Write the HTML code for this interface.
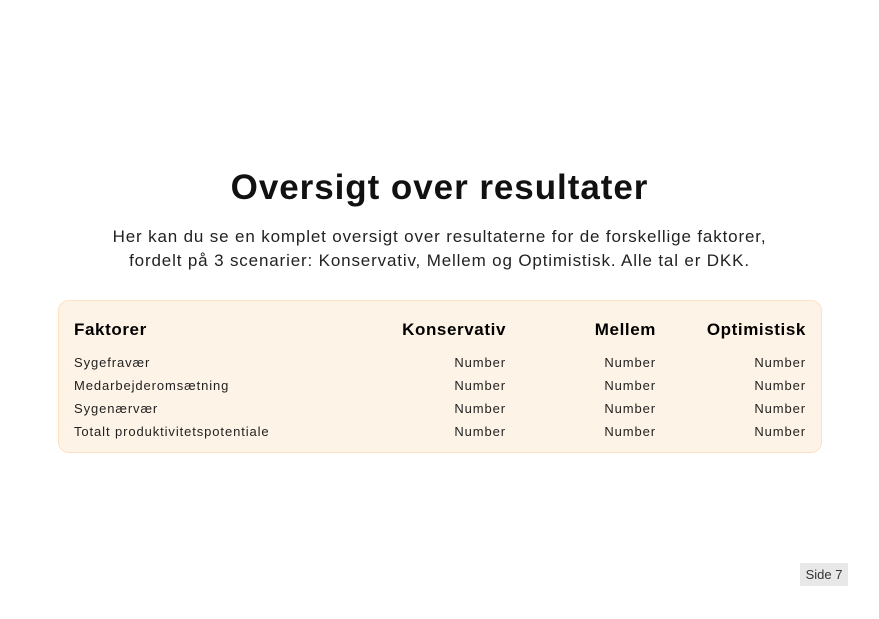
<!DOCTYPE html>
<html><head><meta charset="utf-8"><style>
body{margin:0;width:879px;height:619px;background:#fff;font-family:"Liberation Sans",sans-serif;color:#111;position:relative;overflow:hidden}
h1{position:absolute;top:166px;left:0;width:879px;text-align:center;margin:0;font-size:35px;font-weight:bold;line-height:44px;letter-spacing:0.95px}
p{position:absolute;top:225px;left:0;width:879px;text-align:center;margin:0;font-size:17px;line-height:24px;color:#222;letter-spacing:0.85px}
.card{position:absolute;left:58px;top:300px;width:762px;height:151px;background:#fdf3e6;border:1px solid #fce2c2;border-radius:11px}
.r{position:absolute;left:0;width:100%;height:20px;font-size:13px;color:#222;letter-spacing:0.9px}
.r span{position:absolute;top:0;white-space:nowrap}
.h{font-size:17px;font-weight:bold;color:#000;letter-spacing:0.6px}
.c0{left:15px}.c1{right:315px}.c2{right:165px}.c3{right:15px}
.side{position:absolute;left:800px;top:563px;width:48px;height:23px;background:#e8e8e8;font-size:13px;color:#333;text-align:center;line-height:23px}
</style></head><body>
<h1>Oversigt over resultater</h1>
<p>Her kan du se en komplet oversigt over resultaterne for de forskellige faktorer,<br>fordelt på 3 scenarier: Konservativ, Mellem og Optimistisk. Alle tal er DKK.</p>
<div class="card">
<div class="r h" style="top:19px"><span class="c0">Faktorer</span><span class="c1">Konservativ</span><span class="c2">Mellem</span><span class="c3">Optimistisk</span></div>
<div class="r" style="top:54px"><span class="c0">Sygefravær</span><span class="c1">Number</span><span class="c2">Number</span><span class="c3">Number</span></div>
<div class="r" style="top:77px"><span class="c0">Medarbejderomsætning</span><span class="c1">Number</span><span class="c2">Number</span><span class="c3">Number</span></div>
<div class="r" style="top:100px"><span class="c0">Sygenærvær</span><span class="c1">Number</span><span class="c2">Number</span><span class="c3">Number</span></div>
<div class="r" style="top:123px"><span class="c0">Totalt produktivitetspotentiale</span><span class="c1">Number</span><span class="c2">Number</span><span class="c3">Number</span></div>
</div>
<div class="side">Side 7</div>
</body></html>
